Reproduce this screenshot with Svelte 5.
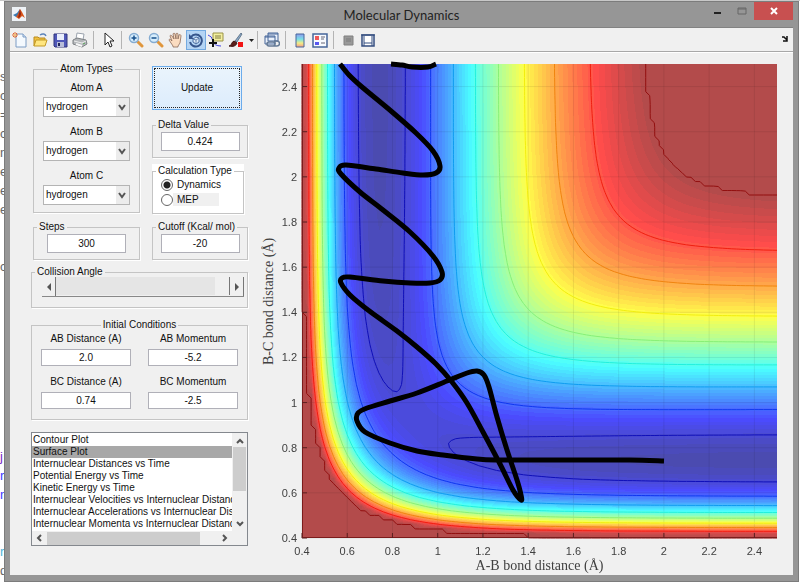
<script>
    import { onMount } from 'svelte';

    const MIN = 0.4;
    const MAX = 2.5;
    const STEP = 0.02;
    const COUNT = 106;
    const WIDTH = 475;
    const HEIGHT = 474;
    const LOWEST = -109.5;
    const CUTOFF = -22;

    const species = ['hydrogen', 'deuterium', 'fluorine', 'chlorine'];
    const ticks = [0.4, 0.6, 0.8, 1, 1.2, 1.4, 1.6, 1.8, 2, 2.2, 2.4];
    const plots = [
        'Contour Plot',
        'Surface Plot',
        'Internuclear Distances vs Time',
        'Potential Energy vs Time',
        'Kinetic Energy vs Time',
        'Internuclear Velocities vs Internuclear Distance',
        'Internuclear Accelerations vs Internuclear Distance',
        'Internuclear Momenta vs Internuclear Distance'
    ];
    // editor window that shows behind the left edge
    const behind = [
        [0, 's'], [1, 'c'], [2, '='], [3, 'c'], [4, 'n'], [5, 'e'], [6, 'e'], [7, 'e'], [10, 'c'],
        [20, 'j', 'purple'], [21, 'r', 'blue'], [22, 'n', 'blue'], [25, 'r', 'cyan'], [26, 'd']
    ];

    let atomA = $state('hydrogen');
    let atomB = $state('hydrogen');
    let atomC = $state('hydrogen');
    let delta = $state('0.424');
    let calcType = $state('dynamics');
    let steps = $state('300');
    let cutoff = $state('-20');
    let angle = $state(180);
    let abDistance = $state('2.0');
    let abMomentum = $state('-5.2');
    let bcDistance = $state('0.74');
    let bcMomentum = $state('-2.5');
    let plot = $state('Surface Plot');
    let canvas;

    // LEPS surface for collinear H + H2, kcal/mol
    function pair(r) {
        const k = 0.18;
        const e = Math.exp(-1.942 * (r - 0.7417));
        const singlet = (1 + k) * 109.5 * (e * e - 2 * e);
        const triplet = (1 - k) * 54.75 * (e * e + 2 * e);
        return [(singlet + triplet) / 2, (singlet - triplet) / 2];
    }

    function energy(x, y) {
        const [q1, j1] = pair(x);
        const [q2, j2] = pair(y);
        const [q3, j3] = pair(x + y);
        const root = Math.sqrt(((j1 - j2) ** 2 + (j2 - j3) ** 2 + (j3 - j1) ** 2) / 2);
        return Math.min((q1 + q2 + q3 - root) / 1.18, CUTOFF);
    }

    const grid = [];
    for (let j = 0; j < COUNT; j++) {
        const row = [];
        for (let i = 0; i < COUNT; i++) row.push(energy(MIN + i * STEP, MIN + j * STEP));
        grid.push(row);
    }

    const clamp = (v) => Math.max(0, Math.min(1, v));
    const scale = (v) => clamp((v - LOWEST) / (CUTOFF - LOWEST));

    function jet(t) {
        const s = 0.015 + t * 0.965;
        return [
            clamp(1.5 - Math.abs(4 * s - 3)),
            clamp(1.5 - Math.abs(4 * s - 2)),
            clamp(1.5 - Math.abs(4 * s - 1))
        ];
    }

    const levels = [-105, -95.5, -85.2, -74.9, -64.6, -54, -43.4, -33.1, CUTOFF - 0.01];

    // marching squares, one path per level
    function contour(level) {
        const dx = WIDTH / (COUNT - 1);
        const dy = HEIGHT / (COUNT - 1);
        let d = '';
        for (let j = 0; j < COUNT - 1; j++) {
            for (let i = 0; i < COUNT - 1; i++) {
                const c = [[i, j], [i + 1, j], [i + 1, j + 1], [i, j + 1]];
                const hits = [];
                for (let n = 0; n < 4; n++) {
                    const [ax, ay] = c[n];
                    const [bx, by] = c[(n + 1) % 4];
                    const a = grid[ay][ax];
                    const b = grid[by][bx];
                    if (a < level !== b < level) {
                        const t = (level - a) / (b - a);
                        const px = (ax + (bx - ax) * t) * dx;
                        const py = HEIGHT - (ay + (by - ay) * t) * dy;
                        hits.push(`${px.toFixed(1)} ${py.toFixed(1)}`);
                    }
                }
                for (let n = 0; n + 1 < hits.length; n += 2) d += `M${hits[n]}L${hits[n + 1]}`;
            }
        }
        const color = jet(scale(level)).map((v) => Math.round(v * 225 + 15));
        return { d, color: `rgb(${color})` };
    }

    const contours = levels.map(contour);

    const track = [
        [664, 461], [630, 460], [580, 460], [530, 460], [497, 460], [477, 459], [443, 455], [417, 451],
        [390, 443], [365, 432], [357, 421], [358, 413], [367, 408], [390, 401], [417, 393], [447, 381],
        [467, 373], [477, 371], [484, 375], [489, 387], [497, 417], [507, 450], [517, 480], [521, 495],
        [521, 500], [513, 490], [500, 464], [483, 432], [467, 403], [452, 382], [436, 364], [417, 347],
        [397, 331], [368, 310], [350, 295], [341, 283], [342, 278], [350, 277], [383, 281], [410, 283],
        [430, 283], [440, 280], [442, 272], [433, 256], [410, 232], [383, 210], [360, 192], [341, 174],
        [339, 168], [346, 165], [376, 169], [403, 173], [423, 175], [436, 173], [440, 166], [433, 151],
        [416, 133], [391, 111], [362, 87], [349, 75], [340, 64]
    ];
    const tail = [[391, 64], [402, 65], [412, 67], [428, 67], [436, 64]];

    function smooth(points) {
        const p = points.map(([x, y]) => [x - 302, y - 64]);
        let d = `M${p[0]}`;
        for (let i = 0; i < p.length - 1; i++) {
            const a = p[i - 1] ?? p[i];
            const b = p[i];
            const c = p[i + 1];
            const e = p[i + 2] ?? c;
            d += `C${b[0] + (c[0] - a[0]) / 6},${b[1] + (c[1] - a[1]) / 6}`;
            d += ` ${c[0] - (e[0] - b[0]) / 6},${c[1] - (e[1] - b[1]) / 6} ${c}`;
        }
        return d;
    }

    const percent = (t) => ((t - MIN) / (MAX - MIN)) * 100;

    onMount(() => {
        const ctx = canvas.getContext('2d');
        const image = ctx.createImageData(WIDTH, HEIGHT);
        for (let y = 0; y < HEIGHT; y++) {
            const gy = ((HEIGHT - 1 - y) / (HEIGHT - 1)) * (COUNT - 1);
            const j = Math.min(Math.floor(gy), COUNT - 2);
            const v = gy - j;
            for (let x = 0; x < WIDTH; x++) {
                const gx = (x / (WIDTH - 1)) * (COUNT - 1);
                const i = Math.min(Math.floor(gx), COUNT - 2);
                const u = gx - i;
                const low = grid[j][i] * (1 - u) + grid[j][i + 1] * u;
                const high = grid[j + 1][i] * (1 - u) + grid[j + 1][i + 1] * u;
                const t = scale(low * (1 - v) + high * v);
                const rgb = jet(Math.round(t * 63) / 63);
                const at = (y * WIDTH + x) * 4;
                for (let n = 0; n < 3; n++) image.data[at + n] = 75 + rgb[n] * 180;
                image.data[at + 3] = 255;
            }
        }
        ctx.putImageData(image, 0, 0);
    });
</script>

<div class="desktop">
    <div class="behind" aria-hidden="true">
        {#each behind as [row, letter, tone]}
            <span class={tone} style="grid-row: {row + 1}">{letter}</span>
        {/each}
    </div>

    <div class="window">
        <header>
            <svg class="logo" viewBox="0 0 14 14" width="14" height="14">
                <rect width="14" height="14" fill="#eef2f6" />
                <path d="M1 8 5 6 8 2 7 9 4 10z" fill="#3a78b0" />
                <path d="M8 2 10 5 13 11 10 9 7 12 4 10 6 7z" fill="#d95319" />
                <path d="M8 2 9 7 8 10 6 11z" fill="#8f2412" />
            </svg>
            <h1>Molecular Dynamics</h1>
            <div class="caption">
                <button aria-label="Minimize"><svg viewBox="0 0 10 10" width="10" height="10"><path d="M1 7h7" stroke="#222" stroke-width="2" /></svg></button>
                <button aria-label="Maximize"><svg viewBox="0 0 10 8" width="10" height="8"><path d="M1 1h8v6H1zM1 2h8" fill="none" stroke="#666" /></svg></button>
                <button class="close" aria-label="Close"><svg viewBox="0 0 8 8" width="8" height="8"><path d="M1 1l6 6M7 1l-6 6" stroke="#fff" stroke-width="2" /></svg></button>
            </div>
        </header>

        <div class="toolbar">
            <button aria-label="New figure">
                <svg viewBox="0 0 16 16"><path d="M4 2h7l3 3v10H4z" fill="#f4f9fe" stroke="#7c9cc4" /><path d="M11 2v3h3" fill="#cfe0f4" stroke="#7c9cc4" /><path d="M3 0v6M0 3h6M1 1l4 4M5 1 1 5" stroke="#e0672f" /><circle cx="3" cy="3" r="1" fill="#ffe08a" /></svg>
            </button>
            <button aria-label="Open">
                <svg viewBox="0 0 16 16"><path d="M2 14V5h4l1 1h6v3" fill="#f0c040" stroke="#b98a1c" /><path d="M8 3c3-2 5-1 6 1" fill="none" stroke="#5b83ba" stroke-width="1.5" /><path d="M2 14 4 8h11l-2 6z" fill="#ffe680" stroke="#c39a26" /></svg>
            </button>
            <button aria-label="Save">
                <svg viewBox="0 0 16 16"><path d="M2 2h13v13H3l-1-1z" fill="#5058b8" stroke="#30347c" /><path d="M5 2h7v6H5z" fill="#e9eefc" /><path d="M5 10h7v5H5z" fill="#b8bdd8" /><path d="M6 11h2v3H6z" fill="#23265c" /></svg>
            </button>
            <button aria-label="Print">
                <svg viewBox="0 0 16 16"><path d="M4 7 5 1l7 1-1 6z" fill="#fff" stroke="#9ba3ae" /><path d="M1 8l4-2 9 2 1 4-5 3-9-3z" fill="#b3b6b9" stroke="#7c8084" /><path d="M2 9l8 2 4-2" fill="none" stroke="#eee" /><path d="M4 12l6 2" stroke="#f8f8f8" stroke-width="2" /><path d="M11 12l2-1" stroke="#55a855" /></svg>
            </button>
            <i></i>
            <button aria-label="Edit plot">
                <svg viewBox="0 0 16 16"><path d="M5 1v12l3-3 2 5 2-1-2-5h4z" fill="#fff" stroke="#222" /></svg>
            </button>
            <i></i>
            <button aria-label="Zoom in">
                <svg viewBox="0 0 16 16"><path d="M10 10l4 4" stroke="#e0963c" stroke-width="3" stroke-linecap="round" /><circle cx="6" cy="6" r="4.5" fill="#d6edfc" stroke="#85acd2" stroke-width="1.5" /><path d="M3.5 6h5M6 3.5v5" stroke="#164f8c" stroke-width="1.5" /></svg>
            </button>
            <button aria-label="Zoom out">
                <svg viewBox="0 0 16 16"><path d="M10 10l4 4" stroke="#e0963c" stroke-width="3" stroke-linecap="round" /><circle cx="6" cy="6" r="4.5" fill="#d6edfc" stroke="#85acd2" stroke-width="1.5" /><path d="M3.5 6h5" stroke="#164f8c" stroke-width="1.5" /></svg>
            </button>
            <button aria-label="Pan">
                <svg viewBox="0 0 16 16"><path d="M5 14 1 8c0-1 1-1 2 0l1 1-2-5c0-1 1-1 2 0l2 3-1-5c0-1 2-1 2 0l1 5V2c0-1 2-1 2 0v5l1-4c1-1 2 0 2 1l-1 7-2 3v1H5z" fill="#fbdcc0" stroke="#8c6a58" stroke-width=".8" /></svg>
            </button>
            <button class="active" aria-label="Rotate 3D">
                <svg viewBox="0 0 16 16"><path d="M3 5a6 6 0 1 1-1 5" fill="none" stroke="#36558c" stroke-width="2" /><path d="M1 2v5h5z" fill="#36558c" /><path d="M5 7l3-2 3 1v4l-3 2-3-2z" fill="#dce9f6" stroke="#4d6ea3" /><path d="M5 7l3 1 3-2M8 8v4" fill="none" stroke="#4d6ea3" stroke-width=".8" /></svg>
            </button>
            <button aria-label="Data cursor">
                <svg viewBox="0 0 16 16"><path d="M0 3q4 1 5 6t8 5" fill="none" stroke="#4242e0" /><path d="M5 1h10v8H5z" fill="#f3efa0" stroke="#9a9347" /><path d="M7 4h6M7 6h6" stroke="#827c45" /><path d="M5 7v8M1 11h8" stroke="#111" stroke-width="2" /></svg>
            </button>
            <button aria-label="Brush">
                <svg viewBox="0 0 16 16"><path d="M7 9l6-8 1 1-5 8z" fill="#8cabc9" stroke="#52677d" stroke-width=".8" /><path d="M1 14c3 0 2-4 5-5l3 2c-1 3-4 4-8 3z" fill="#5c1f1a" stroke="#3a1513" /><path d="M10 10h5v5h-5z" fill="#f11414" /></svg>
            </button>
            <button class="drop" aria-label="Brush colour">
                <svg viewBox="0 0 8 16"><path d="M3 7h5l-2.5 3z" fill="#222" /></svg>
            </button>
            <i></i>
            <button aria-label="Link plot">
                <svg viewBox="0 0 16 16"><path d="M4 1h10v8H4zM1 4h10v8H1z" fill="#eaf1fb" stroke="#46669a" /><path d="M1 5h10M4 2h10" stroke="#46669a" /><path d="M5 10h4a2 2 0 0 1 0 4H5a2 2 0 0 1 0-4zM10 9h3a2 2 0 0 1 0 5h-3" fill="none" stroke="#647a96" stroke-width="1.5" /></svg>
            </button>
            <i></i>
            <button aria-label="Insert colorbar">
                <svg viewBox="0 0 16 16"><defs><linearGradient id="bar" x2="0" y2="1"><stop stop-color="#8e9cf0" /><stop offset=".4" stop-color="#78e0e6" /><stop offset=".7" stop-color="#f4ec84" /><stop offset="1" stop-color="#f29a88" /></linearGradient></defs><path d="M4 2h8v13H4z" fill="url(#bar)" stroke="#46669a" /></svg>
            </button>
            <button aria-label="Insert legend">
                <svg viewBox="0 0 16 16"><path d="M1 2h14v13H1z" fill="#f7faff" stroke="#46669a" stroke-width="1.5" /><path d="M3 4h4v4H3z" fill="#f05858" /><path d="M3 10h4v3H3z" fill="#5858f0" /><path d="M9 5h4M9 7h3M9 11h4" stroke="#667" /></svg>
            </button>
            <i></i>
            <button aria-label="Hide plot tools">
                <svg viewBox="0 0 16 16"><path d="M4 4h9v9H4z" fill="#999" stroke="#808080" /><path d="M6 6h5v4H6z" fill="#8a8a8a" /></svg>
            </button>
            <button aria-label="Show plot tools">
                <svg viewBox="0 0 16 16"><path d="M2 3h12v11H2z" fill="#fff" stroke="#344e80" stroke-width="1.5" /><path d="M1 3h14M4 4v10M12 4v10M4 11h8" stroke="#344e80" /></svg>
            </button>
            <button class="dock" aria-label="Dock">
                <svg viewBox="0 0 8 16"><path d="M1 5h2l3 3M6 4v5H2" fill="none" stroke="#111" stroke-width="1.5" /></svg>
            </button>
        </div>

        <main>
            <form class="panel" onsubmit={(e) => e.preventDefault()}>
                <div class="stack">
                    <fieldset class="center atoms">
                        <legend>Atom Types</legend>
                        <label for="atom-a">Atom A</label>
                        <select id="atom-a" bind:value={atomA}>{#each species as s}<option>{s}</option>{/each}</select>
                        <label for="atom-b">Atom B</label>
                        <select id="atom-b" bind:value={atomB}>{#each species as s}<option>{s}</option>{/each}</select>
                        <label for="atom-c">Atom C</label>
                        <select id="atom-c" bind:value={atomC}>{#each species as s}<option>{s}</option>{/each}</select>
                    </fieldset>
                    <fieldset class="single">
                        <legend id="steps">Steps</legend>
                        <input type="text" aria-labelledby="steps" bind:value={steps}>
                    </fieldset>
                </div>

                <div class="stack right">
                    <button class="update" type="submit"><span>Update</span></button>
                    <fieldset class="single">
                        <legend id="delta">Delta Value</legend>
                        <input type="text" aria-labelledby="delta" bind:value={delta}>
                    </fieldset>
                    <div class="white">
                        <fieldset>
                            <legend>Calculation Type</legend>
                            <label class="radio"><input type="radio" name="calc" value="dynamics" bind:group={calcType}>Dynamics</label>
                            <label class="radio grey"><input type="radio" name="calc" value="mep" bind:group={calcType}>MEP</label>
                        </fieldset>
                    </div>
                    <fieldset class="single">
                        <legend id="cutoff">Cutoff (Kcal/ mol)</legend>
                        <input type="text" aria-labelledby="cutoff" bind:value={cutoff}>
                    </fieldset>
                </div>

                <fieldset class="wide collision">
                    <legend id="angle">Collision Angle</legend>
                    <div class="slider">
                        <button type="button" aria-label="Decrease" onclick={() => angle--}><svg viewBox="0 0 8 8" width="8" height="8"><path d="M6 0v8L2 4z" fill="#555" /></svg></button>
                        <input type="range" min="0" max="180" aria-labelledby="angle" bind:value={angle}>
                        <button type="button" aria-label="Increase" onclick={() => angle++}><svg viewBox="0 0 8 8" width="8" height="8"><path d="M2 0v8l4-4z" fill="#555" /></svg></button>
                    </div>
                </fieldset>

                <fieldset class="wide center initial">
                    <legend>Initial Conditions</legend>
                    <div class="conditions">
                        <label>AB Distance (A)<input type="text" bind:value={abDistance}></label>
                        <label>AB Momentum<input type="text" bind:value={abMomentum}></label>
                        <label>BC Distance (A)<input type="text" bind:value={bcDistance}></label>
                        <label>BC Momentum<input type="text" bind:value={bcMomentum}></label>
                    </div>
                </fieldset>

                <div class="wide listbox">
                    <select size="8" aria-label="Plot type" bind:value={plot}>
                        {#each plots as p}<option class:chosen={p === plot}>{p}</option>{/each}
                    </select>
                    <div class="vbar">
                        <svg viewBox="0 0 8 8" width="8" height="8"><path d="M1 6l3-3 3 3" /></svg>
                        <b></b>
                        <svg viewBox="0 0 8 8" width="8" height="8"><path d="M1 2l3 3 3-3" /></svg>
                    </div>
                    <div class="hbar">
                        <svg viewBox="0 0 8 8" width="8" height="8"><path d="M6 1 3 4l3 3" /></svg>
                        <b></b>
                        <svg viewBox="0 0 8 8" width="8" height="8"><path d="M2 1l3 3-3 3" /></svg>
                    </div>
                </div>
            </form>

            <figure>
                <div class="ylabel">B-C bond distance (Å)</div>
                <div class="yticks">
                    {#each ticks as t}<span style="bottom: {percent(t)}%">{t}</span>{/each}
                </div>
                <div class="surface">
                    <canvas bind:this={canvas} width={WIDTH} height={HEIGHT}></canvas>
                    <svg viewBox="0 0 {WIDTH} {HEIGHT}">
                        {#each ticks as t}
                            <path class="gridline" d="M{percent(t) * 4.75} 0v474M0 {474 - percent(t) * 4.74}h475" />
                        {/each}
                        {#each contours as c}
                            <path d={c.d} stroke={c.color} fill="none" />
                        {/each}
                        <path d="M.5 0v473.5h474.5" fill="none" stroke="#7c1c1c" />
                        {#each ticks as t}
                            <path d="M{percent(t) * 4.75} 474v-5M0 {474 - percent(t) * 4.74}h5" stroke="#5c2020" />
                        {/each}
                        <path class="track" d={smooth(track)} />
                        <path class="track" d={smooth(tail)} />
                    </svg>
                </div>
                <div class="xticks">
                    {#each ticks as t}<span style="left: {percent(t)}%">{t}</span>{/each}
                </div>
                <div class="xlabel">A-B bond distance (Å)</div>
            </figure>
        </main>
    </div>
</div>

<style>
    :global(body) {
        background: #fff;
        font-family: "Liberation Sans", Arial, sans-serif;
        font-size: 10px;
        line-height: 14px;
        color: #111;
    }

    .desktop {
        box-sizing: border-box;
        min-height: 100vh;
        display: grid;
        grid-template-columns: 4px 1fr;
        padding: 1px 1px 0 0;
        background: linear-gradient(#c8c8c8 1px, #fff 1px);
    }

    .behind {
        display: grid;
        grid-auto-rows: 19px;
        align-content: start;
        padding-top: 66px;
        overflow: hidden;
        height: 515px;
        font-size: 13px;
        line-height: 19px;
        color: #666;
    }

    .purple { color: #7a28c8; }
    .blue { color: #3c3cff; }
    .cyan { color: #4ab4d8; }

    .window {
        box-sizing: border-box;
        display: flex;
        flex-direction: column;
        min-width: 0;
        background: #969696;
        border: 1px solid #7c7c7c;
        padding: 0 5px 6px;
    }

    header {
        display: grid;
        grid-template-columns: 1fr auto 1fr;
        height: 25px;
        flex: none;
    }

    .logo {
        margin: 5px 0 0 2px;
    }

    h1 {
        margin: 0;
        font: 13px/26px Lato, "Open Sans", sans-serif;
        color: #222;
    }

    button {
        padding: 0;
        border: 0;
        background: none;
        font: inherit;
        color: inherit;
        display: flex;
        align-items: center;
        justify-content: center;
    }

    .caption {
        display: flex;
        justify-content: flex-end;
        height: 18px;
    }

    .caption button {
        width: 24px;
    }

    .caption .close {
        width: 39px;
        background: #c85050;
    }

    .toolbar {
        display: flex;
        flex: none;
        align-items: center;
        height: 23px;
        background: #f0f0f0;
        border-top: 1px solid #828282;
        border-bottom: 1px solid #a8a8a8;
    }

    .toolbar button {
        width: 20px;
        height: 20px;
    }

    .toolbar svg {
        width: 16px;
        height: 16px;
    }

    .toolbar .active {
        box-sizing: border-box;
        background: #b4d4f4;
        border: 1px solid #74aae0;
    }

    .toolbar .drop, .toolbar .dock {
        width: 8px;
    }

    .toolbar .drop svg, .toolbar .dock svg {
        width: 8px;
    }

    .toolbar .dock {
        margin: 0 4px 0 auto;
    }

    .toolbar i {
        width: 1px;
        height: 18px;
        margin: 0 4px 0 3px;
        background: #b4b4b4;
    }

    main {
        flex: 1;
        display: grid;
        grid-template-columns: 217px 1fr;
        gap: 13px;
        align-items: start;
        padding: 9px 16px 0 21px;
        background: #f0f0f0;
        border-top: 1px solid #fff;
    }

    .panel {
        display: grid;
        grid-template-columns: 107px 96px;
        column-gap: 12px;
        padding-left: 2px;
    }

    .stack {
        display: flex;
        flex-direction: column;
        gap: 7px;
    }

    .right {
        gap: 6px;
        padding-top: 4px;
    }

    .wide {
        grid-column: 1 / -1;
        margin-left: -2px;
    }

    fieldset {
        box-sizing: border-box;
        min-width: 0;
        margin: 0;
        padding: 0;
        border: 1px solid #c4c4c4;
        box-shadow: 1px 1px 0 #fff;
    }

    legend {
        margin-left: 3px;
        padding: 0 2px;
        height: 14px;
    }

    .center legend {
        margin: 0 auto;
    }

    label {
        display: block;
    }

    input[type='text'] {
        box-sizing: border-box;
        width: 79px;
        height: 19px;
        padding: 0;
        border: 1px solid #b0b0b8;
        background: #fff;
        font: inherit;
        color: inherit;
        text-align: center;
        border-radius: 0;
    }

    .atoms {
        display: flex;
        flex-direction: column;
        align-items: center;
        height: 151px;
        padding-top: 5px;
    }

    .atoms label {
        margin-bottom: 2px;
    }

    .atoms select {
        appearance: none;
        box-sizing: border-box;
        width: 87px;
        height: 20px;
        margin-bottom: 8px;
        padding: 0 2px;
        border: 1px solid #b4b4b4;
        border-radius: 0;
        font: inherit;
        color: inherit;
        background: #fff url("data:image/svg+xml,%3Csvg xmlns='http://www.w3.org/2000/svg' width='13' height='18'%3E%3Cpath d='M0 0h13v18H0z' fill='%23ececec'/%3E%3Cpath d='M3 7l3 4 3-4' fill='none' stroke='%23555' stroke-width='2'/%3E%3C/svg%3E") right center no-repeat;
    }

    .single {
        height: 40px;
    }

    .single input {
        display: block;
        margin: 0 auto;
    }

    .update {
        box-sizing: border-box;
        width: 90px;
        height: 44px;
        padding: 1px;
        align-items: stretch;
        border: 1px solid #6cacec;
        background: linear-gradient(#eaf4fc, #dcecfc);
        margin-bottom: 2px;
    }

    .update span {
        flex: 1;
        border: 1px dotted #222;
        line-height: 38px;
    }

    .white {
        width: 92px;
        background: #fff;
    }

    .white fieldset {
        height: 50px;
    }

    .radio {
        display: flex;
        align-items: center;
        gap: 4px;
        width: 58px;
        height: 13px;
        margin: 0 0 2px 8px;
    }

    .grey {
        background: linear-gradient(90deg, #fff 12px, #f0f0f0 12px);
    }

    input[type='radio'] {
        appearance: none;
        box-sizing: border-box;
        flex: none;
        width: 12px;
        height: 12px;
        margin: 0;
        border: 1px solid #666;
        border-radius: 50%;
        background: #fff;
    }

    input[type='radio']:checked {
        background: radial-gradient(#222 3px, #fff 4px);
    }

    .collision {
        height: 43px;
        margin-top: 5px;
    }

    .slider {
        display: flex;
        height: 19px;
        margin: -2px 3px 0 10px;
        border-bottom: 1px solid #888;
    }

    .slider button {
        box-sizing: border-box;
        width: 14px;
        border-right: 1px solid #777;
    }

    .slider input {
        appearance: none;
        flex: 1;
        min-width: 0;
        height: 18px;
        margin: 0;
        background: #e5e5e5;
    }

    .slider input::-webkit-slider-thumb {
        appearance: none;
        box-sizing: border-box;
        width: 15px;
        height: 18px;
        background: #f0f0f0;
        border-right: 1px solid #777;
    }

    .initial {
        height: 102px;
        margin-top: 10px;
    }

    .conditions {
        display: grid;
        grid-template-columns: 90px 90px;
        justify-content: space-between;
        row-gap: 9px;
        padding: 0 9px;
        text-align: center;
    }

    .conditions input {
        display: block;
        width: 90px;
        height: 17px;
        margin-top: 3px;
    }

    .listbox {
        display: grid;
        grid-template-columns: 1fr 15px;
        grid-template-rows: 98px 14px;
        margin-top: 12px;
        border: 1px solid #84888e;
        background: #fff;
    }

    .listbox select {
        appearance: none;
        min-width: 0;
        width: 100%;
        height: 98px;
        padding: 1px 0 0;
        border: 0;
        outline: 0;
        border-radius: 0;
        overflow: hidden;
        font: inherit;
        background: #fff;
        color: inherit;
    }

    option {
        min-height: 0;
        color: #111;
    }

    .listbox option {
        height: 12px;
        padding: 0 1px;
        line-height: 12px;
        white-space: nowrap;
    }

    .listbox .chosen {
        background: linear-gradient(#a8a8a8, #a8a8a8);
    }

    .vbar, .hbar {
        display: flex;
        align-items: center;
        background: #f0f0f0;
    }

    .vbar {
        flex-direction: column;
        padding: 4px 0 3px;
    }

    .hbar {
        grid-column: 1 / -1;
        padding: 0 18px 0 3px;
    }

    .vbar b {
        width: 13px;
        height: 44px;
        margin: 2px 0 auto;
        background: #cdcdcd;
    }

    .hbar b {
        width: 153px;
        height: 13px;
        margin: 0 auto 0 4px;
        background: #cdcdcd;
    }

    .vbar path, .hbar path {
        fill: none;
        stroke: #555;
        stroke-width: 2;
    }

    figure {
        display: grid;
        grid-template-columns: 16px 25px 1fr;
        margin: 2px 0 0;
        color: #404040;
    }

    .ylabel, .xlabel {
        font: 14px/16px "Liberation Serif", "Times New Roman", serif;
        text-align: center;
    }

    .ylabel {
        writing-mode: vertical-rl;
        transform: rotate(180deg);
    }

    .yticks, .xticks {
        position: relative;
        font-size: 11px;
    }

    .yticks span {
        position: absolute;
        right: 5px;
        transform: translateY(50%);
    }

    .surface {
        display: grid;
        aspect-ratio: 475 / 474;
    }

    .surface canvas, .surface svg {
        grid-area: 1 / 1;
        width: 100%;
        height: 100%;
    }

    .surface svg {
        overflow: visible;
    }

    .gridline {
        stroke: #000;
        stroke-opacity: .08;
        fill: none;
    }

    .track {
        fill: none;
        stroke: #000;
        stroke-width: 5;
        stroke-linejoin: round;
    }

    .xticks {
        grid-column: 3;
        height: 20px;
    }

    .xticks span {
        position: absolute;
        top: 6px;
        transform: translateX(-50%);
    }

    .xlabel {
        grid-column: 3;
    }
</style>
